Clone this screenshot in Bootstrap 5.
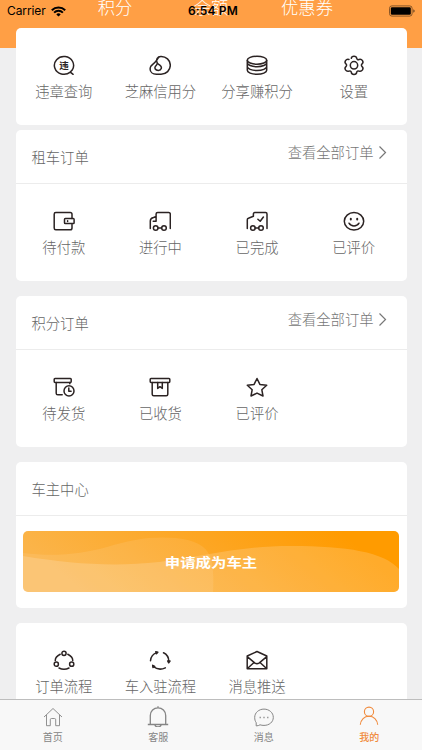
<!DOCTYPE html>
<html lang="zh-CN">
<head>
<meta charset="utf-8">
<meta name="viewport" content="width=device-width, initial-scale=1">
<title>我的</title>
<link href="https://cdn.jsdelivr.net/npm/bootstrap@5.3.0/dist/css/bootstrap.min.css" rel="stylesheet">
<style>
body{font-family:"Noto Sans CJK SC",sans-serif;font-weight:300;font-size:14.3px;line-height:20px;color:#666;background:#efeff0}
.screen{height:750px}
.hero{height:48px;background:#ff9f45;color:#fff;font-size:17.3px;padding:0 67px;flex:none}
.hero span{margin-top:-3.500px;width:96px}
.status{height:22px;padding:0 7px;color:#000;font:12px/22px Inter,sans-serif;z-index:3}
.status .carrier{letter-spacing:-.1px;margin-right:5.500px}
.status .time{font-weight:600;letter-spacing:.15px;left:188px;top:0}
.panels{padding:0 15.5px;margin-top:-20px}
.panel{background:#fff;border-radius:5px}
.panel+.panel{margin-top:15px}
.panel.near{margin-top:4.5px}
.panel-head{height:54px;padding:1px 19.500px 0 16px;border-bottom:1px solid #ececec}
.more{margin-top:-9px;color:#777}
.more svg{margin-left:4.500px}
.grid4{padding-right:4.500px;height:97.3px}
.item{padding-top:27px;white-space:nowrap}
.item svg{display:block;margin-bottom:5px}
.ic{fill:none;stroke:#2b2323;stroke-width:1.5;stroke-linejoin:round;stroke-linecap:round}
.banner-wrap{padding:15px 7.5px 15.5px}
.banner{height:61px;border-radius:5px;overflow:hidden;color:#fff;font-weight:700;font-size:15.4px}
.banner svg{left:0;top:0;width:100%;height:100%}
.banner span{transform:scaleY(.84);margin-top:-2px}
.tabs{height:51.5px;flex:none;background:#f8f8f8;border-top:1px solid #bdbdbd;color:#858585;font-size:10px;font-weight:400;line-height:14px;z-index:2}
.tabs svg{display:block;margin:5px 0 3.500px;fill:none;stroke:currentColor}
.tabs .on{color:#f08a3c;font-weight:500}
</style>
<script src="https://cdn.jsdelivr.net/npm/bootstrap@5.3.0/dist/js/bootstrap.bundle.min.js"></script>
</head>
<body>
<div class="screen d-flex flex-column position-relative overflow-hidden">
  <div class="status position-absolute top-0 start-0 w-100 d-flex align-items-center justify-content-between">
    <div class="d-flex align-items-center"><span class="carrier">Carrier</span>
      <svg width="15" height="11" viewBox="0 0 15 11" fill="none" stroke="#000" stroke-width="2"><path d="M.8 4.2a9.6 9.6 0 0 1 13.4 0M3.1 6.6a6.3 6.3 0 0 1 8.8 0"/><path d="M7.5 10.6 5.3 8.4a3.2 3.2 0 0 1 4.4 0z" fill="#000" stroke="none"/></svg>
    </div>
    <span class="time position-absolute">6:54 PM</span>
    <svg width="26" height="12" viewBox="0 0 26 12"><rect x=".5" y=".9" width="22.6" height="10.2" rx="2.4" fill="none" stroke="#6b4420" stroke-width=".8"/><rect x="1.8" y="2.2" width="20" height="7.6" rx="1.2"/><path d="M24.3 4.2v3.6q1.4-.5 1.4-1.8t-1.4-1.8z" fill="#6b4420"/></svg>
  </div>
  <main class="flex-fill overflow-hidden">
    <header class="hero d-flex text-center"><span>积分</span><span>余额</span><span>优惠券</span></header>
    <div class="panels position-relative">
      <section class="panel">
        <div class="grid4 d-flex">
          <div class="item col-3 d-flex flex-column align-items-center">
            <svg class="ic" width="22" height="21" viewBox="0 0 22 21"><path d="M17.3 17.1A9.6 8.9 0 1 1 19.2 15M17.3 17.1l2.8 2.2M19.2 15l-1.9 2.1"/><text x="11" y="13.7" text-anchor="middle" font-size="9.5" font-weight="700" fill="#2b2323" stroke="none">违</text></svg>
            <span>违章查询</span></div>
          <div class="item col-3 d-flex flex-column align-items-center">
            <svg class="ic" width="22" height="21" viewBox="0 0 22 21"><path d="M8.2 7.8C6.7 4.5 8.5 1.6 11.8 1.5c5.2-.2 9.5 3.5 9.5 8.8 0 5-4 8.9-9.2 8.9H7.4c-3.7 0-6.3-2.1-6.3-5.3 0-3.2 2.3-4.5 4-5.800 2.400-1.900 3-4.200 5.100-6.200M8.200 7.800c.5 1.100 1.500 1.500 2.600 2.300 2.800 2 1.600 5.300-1.500 5.300-3 0-4.200-2.300-2.700-4.300 1-1.300 2-1.600 1.600-3.300z"/></svg>
            <span>芝麻信用分</span></div>
          <div class="item col-3 d-flex flex-column align-items-center">
            <svg class="ic" width="22" height="21" viewBox="0 0 22 21"><ellipse cx="11" cy="5.2" rx="9.7" ry="4"/><path d="M1.3 5.2v10.100c0 2.200 4.300 4 9.700 4s9.700-1.800 9.700-4V5.200M1.300 7.700c0 2.200 4.300 4 9.700 4s9.700-1.800 9.700-4M1.300 11.500c0 2.200 4.300 4 9.700 4s9.700-1.800 9.700-4"/></svg>
            <span>分享赚积分</span></div>
          <div class="item col-3 d-flex flex-column align-items-center">
            <svg class="ic" width="22" height="21" viewBox="0 0 22 21"><circle cx="11" cy="10.3" r="3.7"/><path d="M8.3 3.3C8.5 1.8 9.1 1.200 11 1.200s2.500.6 2.700 2.100c.1 1.100 1.200 1.700 2.300 1.200 1.600-.7 2.500-.3 3.500 1.200.9 1.500.8 2.200-.4 3.200-.9.7-.9 2 0 2.700 1.200 1 1.300 1.800.4 3.300-1 1.500-1.900 1.800-3.500 1.200-1.100-.5-2.200.1-2.300 1.200-.2 1.500-.8 2.100-2.700 2.100s-2.500-.6-2.700-2.100c-.1-1.100-1.200-1.700-2.300-1.200-1.600.6-2.500.3-3.500-1.200-.9-1.500-.8-2.300.4-3.300.9-.7.9-2 0-2.700-1.200-1-1.300-1.700-.4-3.200 1-1.500 1.900-1.900 3.500-1.200"/></svg>
            <span>设置</span></div>
        </div>
      </section>

      <section class="panel near">
        <div class="panel-head d-flex align-items-center justify-content-between"><span>租车订单</span>
          <span class="more d-flex align-items-center">查看全部订单<svg width="9" height="14" viewBox="0 0 9 14" fill="none" stroke="#777" stroke-width="1.2"><path d="m1.500 1.500 6 6-6 6"/></svg></span></div>
        <div class="grid4 d-flex">
          <div class="item col-3 d-flex flex-column align-items-center">
            <svg class="ic" width="22" height="21" viewBox="0 0 22 21"><path d="M19 7.400V3.200Q19 1.500 17.300 1.500H2.800Q1.200 1.500 1.200 3.200V17q0 1.800 1.600 1.800h14.500Q19 18.800 19 17v-3.400"/><rect x="11.500" y="7.600" width="9.600" height="5" rx=".8"/><path d="M14.600 9.800v.7"/></svg>
            <span>待付款</span></div>
          <div class="item col-3 d-flex flex-column align-items-center">
            <svg class="ic" width="22" height="21" viewBox="0 0 22 21"><path d="M1.300 17.500V10c0-2 1-3 3.200-3.500l2.600-1V3.100q0-1.500 1.600-1.500h11q1.600 0 1.600 1.500V17.500M7.100 5.500v4.800H4.200M9 17h3.500"/><circle cx="6.700" cy="17" r="2.300"/><circle cx="15" cy="17" r="2.300"/></svg>
            <span>进行中</span></div>
          <div class="item col-3 d-flex flex-column align-items-center">
            <svg class="ic" width="22" height="21" viewBox="0 0 22 21"><path d="M1.300 17.500V8.700q0-1.100 1.100-1.500l5-2V3q0-1.400 1.400-1.400h10.800q1.400 0 1.400 1.400v14.500M9 17h3.700M11.900 8.300l2.300 2 3.200-4.300"/><circle cx="6.900" cy="17" r="2.300"/><circle cx="15" cy="17" r="2.300"/></svg>
            <span>已完成</span></div>
          <div class="item col-3 d-flex flex-column align-items-center">
            <svg class="ic" width="22" height="21" viewBox="0 0 22 21"><ellipse cx="11" cy="10.300" rx="9.700" ry="8.800"/><path d="M6 12.200q1.700 2.800 5 2.800t5-2.800"/><path d="M7.800 7.700v.9M14.200 7.700v.9" stroke-width="2"/></svg>
            <span>已评价</span></div>
        </div>
      </section>

      <section class="panel">
        <div class="panel-head d-flex align-items-center justify-content-between"><span>积分订单</span>
          <span class="more d-flex align-items-center">查看全部订单<svg width="9" height="14" viewBox="0 0 9 14" fill="none" stroke="#777" stroke-width="1.2"><path d="m1.500 1.500 6 6-6 6"/></svg></span></div>
        <div class="grid4 d-flex">
          <div class="item col-3 d-flex flex-column align-items-center">
            <svg class="ic" width="22" height="21" viewBox="0 0 22 21"><rect x="1.200" y="1.500" width="17" height="3.900" rx=".8"/><path d="M3.200 5.400v10.800q0 1.600 1.600 1.600h4.400M16.800 5.400v1.400"/><ellipse cx="16" cy="13.900" rx="5" ry="5.200"/><path d="M15.800 10.900v3.300h2.300"/></svg>
            <span>待发货</span></div>
          <div class="item col-3 d-flex flex-column align-items-center">
            <svg class="ic" width="22" height="21" viewBox="0 0 22 21"><rect x="1.200" y="1.500" width="19.600" height="3.900" rx=".8"/><path d="M3.200 5.400v11.900q0 1.500 1.500 1.500h12.600q1.500 0 1.500-1.500V5.400M8.700 5.400v6l2.300-1.700 2.300 1.700v-6"/></svg>
            <span>已收货</span></div>
          <div class="item col-3 d-flex flex-column align-items-center">
            <svg class="ic" width="22" height="21" viewBox="0 0 22 21"><path d="m11 1.500 2.900 5.900 6.800.9-4.900 4.400 1.200 6.300-6-2.900L5 19l1.200-6.300-4.900-4.400 6.800-.9z"/></svg>
            <span>已评价</span></div>
        </div>
      </section>

      <section class="panel">
        <div class="panel-head d-flex align-items-center"><span>车主中心</span></div>
        <div class="banner-wrap">
          <div class="banner position-relative d-flex align-items-center justify-content-center">
            <svg class="position-absolute" viewBox="0 0 376 61" preserveAspectRatio="none">
              <defs><linearGradient id="amber" x2="1" y2="0" x1="0" y1=".2"><stop stop-color="#fbb449"/><stop offset=".5" stop-color="#fda520"/><stop offset=".85" stop-color="#ff9b00"/></linearGradient></defs>
              <path fill="url(#amber)" d="M0 0h376v61H0z"/>
              <path fill="#fff" fill-opacity=".09" d="M0 22c32 4 59 1 84-6 25-8 46-11 69-9 19 2 30 8 34 18 3 9 4 22 3 36H0z"/>
              <path fill="#fff" fill-opacity=".17" d="M0 25c48 8 91 11 136 6 43-5 79-16 132-16 56 0 93 6 108 23v23H0z"/>
            </svg>
            <span class="position-relative">申请成为车主</span>
          </div>
        </div>
      </section>

      <section class="panel">
        <div class="grid4 d-flex">
          <div class="item col-3 d-flex flex-column align-items-center">
            <svg class="ic" width="22" height="21" viewBox="0 0 22 21"><circle cx="11" cy="3.300" r="2.100"/><circle cx="3.300" cy="14.200" r="2.100"/><circle cx="18.700" cy="14.200" r="2.100"/><path d="M7.200 4.200Q2 6.700 2.300 10.600M14.800 4.200q5.200 2.500 4.900 6.400M6 18q5 2.600 10 0"/></svg>
            <span>订单流程</span></div>
          <div class="item col-3 d-flex flex-column align-items-center">
            <svg class="ic" width="22" height="21" viewBox="0 0 22 21"><path d="M1.500 10.700Q2 4.500 8 2.600M14.500 2.800q5.300 2.500 5.300 8.700M16.300 17.800q-6.500 3.200-12-1.300"/><path d="m6.800 1.700 2 .5-1.500 1.600zM18.700 10.900l2.300.1-1.300 1.800zM3.700 15.300l2 1-1.700 1.200z" fill="#2b2323"/></svg>
            <span>车入驻流程</span></div>
          <div class="item col-3 d-flex flex-column align-items-center">
            <svg class="ic" width="22" height="21" viewBox="0 0 22 21"><path d="M11 1.500 1.200 6v12.700h19.600V6zM1.200 6.700 9 13.100q2 1.200 4 0l7.800-6.400M1.700 18.200 8 12.500M20.300 18.200 14 12.500"/></svg>
            <span>消息推送</span></div>
        </div>
      </section>
    </div>
  </main>
  <nav class="tabs d-flex">
    <div class="col-3 d-flex flex-column align-items-center"><svg width="22" height="22" viewBox="0 0 22 22" stroke-width=".9"><path d="M2 12 11 3.500 20 12M4.500 10v10.700h3.800v-6q0-1.200 1.200-1.200h3q1.200 0 1.200 1.200v6h3.800V10"/></svg><span>首页</span></div>
    <div class="col-3 d-flex flex-column align-items-center"><svg width="22" height="22" viewBox="0 0 22 22" stroke-width="1.300"><path d="M3.300 19.500V10.500a7.700 7.700 0 0 1 15.400 0v9M.8 19.500h20.400M7.800 19.700q.8 2.300 3.200 2.300t3.200-2.300M11 3V1.200"/></svg><span>客服</span></div>
    <div class="col-3 d-flex flex-column align-items-center"><svg width="22" height="22" viewBox="0 0 22 22" stroke-width="1"><path d="M3.200 17.700v3.200c1.500 0 3-.5 3.800-1.100 1.200.4 2.600.6 4 .6 5.200 0 9.300-3.300 9.300-8s-4.100-8.300-9.300-8.300-9.300 3.600-9.300 8.300c0 2.100.5 3.900 1.500 5.300z"/><path d="M6.600 12.400h1.200M10.400 12.400h1.200M14.200 12.400h1.200" stroke-width="1.500"/></svg><span>消息</span></div>
    <div class="on col-3 d-flex flex-column align-items-center"><svg width="22" height="22" viewBox="0 0 22 22" stroke-width="1.100"><circle cx="11" cy="6.700" r="4.600"/><path d="M2.300 19.700c.5-5 4-8.400 8.700-8.400s8.200 3.400 8.700 8.400"/></svg><span>我的</span></div>
  </nav>
</div>
</body>
</html>
